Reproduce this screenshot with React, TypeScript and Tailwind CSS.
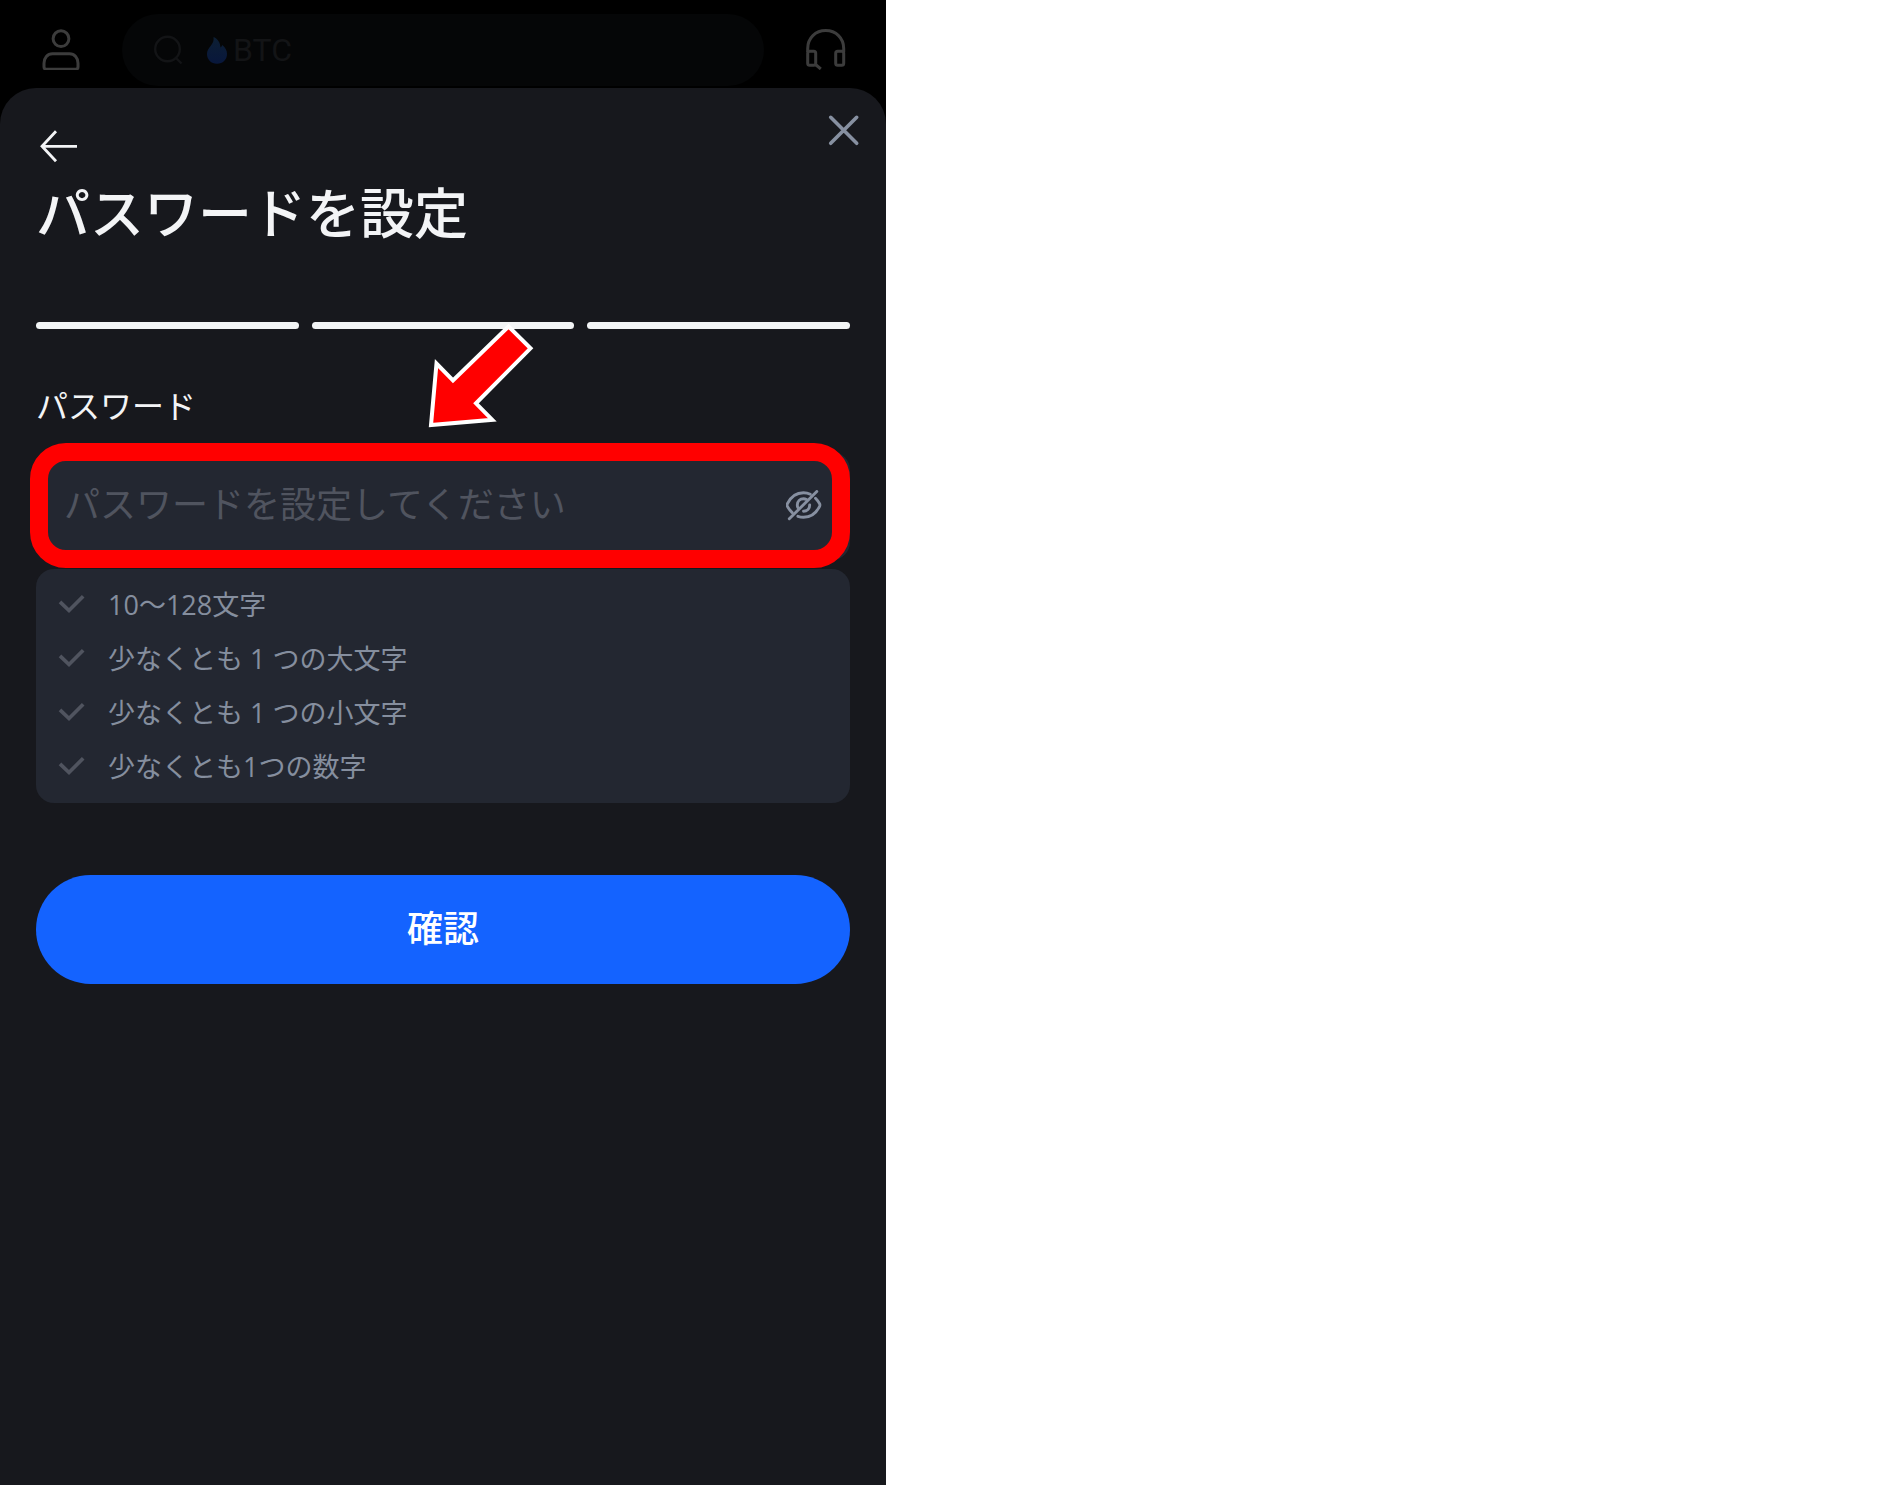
import { useState } from 'react';

const rules = [
  '10〜128文字',
  '少なくとも 1 つの大文字',
  '少なくとも 1 つの小文字',
  '少なくとも1つの数字',
];

const UserIcon = () => (
  <svg viewBox="0 0 40 46" className="h-[46px] w-10" fill="none" stroke="#3c3c3c" strokeWidth="3">
    <circle cx="21" cy="14.700" r="7.900" />
    <path d="M12.500 29.800h17c5 0 8.500 4 8.500 9.500v3.700c0 1.400-.8 2.200-2.200 2.200H6.200c-1.400 0-2.200-.8-2.200-2.200v-3.700c0-5.500 3.500-9.500 8.500-9.500z" />
  </svg>
);

const HeadsetIcon = () => (
  <svg viewBox="0 0 40 46" className="h-[46px] w-10" fill="none" stroke="#3c3c3c" strokeWidth="3">
    <path d="M1.700 28v-3.500C1.700 14 9.500 6.600 19.700 6.600S37.700 14 37.700 24.500V28" />
    <rect x="1.700" y="27.300" width="8" height="14" rx="2" />
    <rect x="29.700" y="27.300" width="8" height="14" rx="2" />
    <path d="M9.500 40.500l5.300 4.500" />
  </svg>
);

const SearchIcon = () => (
  <svg viewBox="0 0 32 32" className="h-8 w-8" fill="none" stroke="#131416" strokeWidth="2.400">
    <circle cx="13.500" cy="15" r="12.300" />
    <path d="M21.500 23.500l6 6" />
  </svg>
);

const FlameIcon = () => (
  <svg viewBox="0 0 20 27" className="h-[27px] w-5">
    <defs>
      <linearGradient id="flame" x1="0" y1="0" x2="0" y2="1">
        <stop offset="0" stopColor="#0d1f33" />
        <stop offset="1" stopColor="#08173c" />
      </linearGradient>
    </defs>
    <path
      fill="url(#flame)"
      d="M6.500 0c4.500 2 6.700 5.500 7 10.500.9-.5 1.400-1.300 1.700-2.500C18.500 10.500 20 13.500 20 17c0 5.700-4.300 9.800-10 9.800S0 22.700 0 17c0-3.500 1.800-6 4-8.500C6 6 7 3.500 6.500 0z"
    />
  </svg>
);

const EyeOffIcon = () => (
  <svg viewBox="0 0 36 32" className="h-8 w-9" fill="none" stroke="#8790a1" strokeWidth="2.900" strokeLinecap="round">
    <path d="M24.300 4.200C22.200 3.200 20 2.700 17.500 2.700 10.500 2.700 4.600 7.200 1.400 13.700c-.4.900-.4 1.700 0 2.600C2.700 18.800 4.300 20.800 6.200 22.600" />
    <path d="M29.500 8.200c1.600 1.600 2.900 3.400 4.100 5.500.4.900.4 1.700 0 2.600C30.400 22.800 24.500 27.300 17.500 27.300c-2 0-3.900-.4-5.600-1" />
    <path d="M20.500 9.500c-1-.5-2-.7-3-.7-3.500 0-6.200 2.700-6.200 6.200 0 1 .2 2 .7 2.800" />
    <path d="M23.700 15c0 3.500-2.700 6.200-6.200 6.200" />
    <path d="M30.800 1.500L3.300 28.800" />
  </svg>
);

const App = () => {
  const [hide, setHide] = useState(true);
  const [password, setPassword] = useState('');

  const handleSubmit = (e: any) => {
    e.preventDefault();
  };

  return (
    <div className="min-h-screen bg-white">
      <div className="flex min-h-screen w-full max-w-[886px] flex-col bg-black font-[Roboto,'Noto_Sans_CJK_JP',sans-serif]">
        <header className="flex h-[88px] items-start gap-[42px] px-10 pt-[14px]">
          <button type="button" aria-label="アカウント" className="mt-[10px]">
            <UserIcon />
          </button>
          <div className="flex h-[72px] flex-1 items-center rounded-full bg-[#050607] pl-8">
            <SearchIcon />
            <span className="ml-[21px]">
              <FlameIcon />
            </span>
            <span className="ml-[6px] text-[32px] leading-10 text-[#131416]">BTC</span>
          </div>
          <button type="button" aria-label="サポート" className="mt-[10px]">
            <HeadsetIcon />
          </button>
        </header>

        <main className="flex-1 rounded-t-[36px] bg-[#17181d] pt-6">
          <div className="flex items-start justify-between pr-6 pl-9">
            <button type="button" aria-label="戻る" className="mt-3">
              <svg viewBox="0 0 44 44" className="h-11 w-11" fill="none" stroke="#f3f4f6" strokeWidth="2.800">
                <path d="M41 22.300H6M20 7.300L6 22.300l14 15" />
              </svg>
            </button>
            <button type="button" aria-label="閉じる">
              <svg viewBox="0 0 36 36" className="h-9 w-9" fill="none" stroke="#8790a1" strokeWidth="3.600" strokeLinecap="round">
                <path d="M4.700 5.300l26 26M30.700 5.300l-26 26" />
              </svg>
            </button>
          </div>

          <div className="px-9">
            <h1 className="mt-3 text-[54px] leading-[72px] font-medium text-[#f3f4f6]">パスワードを設定</h1>

            <div className="mt-[70px] flex gap-[13px]">
              <div className="h-[7px] flex-1 rounded-full bg-[#f2f4f5]" />
              <div className="h-[7px] flex-1 rounded-full bg-[#f2f4f5]" />
              <div className="h-[7px] flex-1 rounded-full bg-[#f2f4f5]" />
            </div>

            <form onSubmit={handleSubmit} className="mt-[54px]">
              <label htmlFor="password" className="block text-[32px] leading-[48px] text-[#f3f4f6]">
                パスワード
              </label>

              <div className="relative mt-[21px]">
                <div className="flex h-[108px] items-center rounded-[18px] bg-[#232731] pr-7 pl-7">
                  <input
                    id="password"
                    name="password"
                    type={hide ? 'password' : 'text'}
                    value={password}
                    onChange={(e) => setPassword(e.target.value)}
                    placeholder="パスワードを設定してください"
                    className="h-full min-w-0 flex-1 bg-transparent text-[36px] text-[#f3f4f6] outline-none placeholder:text-[#50545f]"
                  />
                  <button type="button" aria-label="パスワードを表示" onClick={() => setHide(!hide)}>
                    <EyeOffIcon />
                  </button>
                </div>

                {/* highlight frame + pointer */}
                <div className="pointer-events-none absolute -top-[9px] right-0 -bottom-2 -left-[6px] rounded-[36px] border-[18px] border-[#ff0000]" />
                <svg viewBox="0 0 108 108" className="pointer-events-none absolute -top-[130px] left-[391px] h-[108px] w-[108px]">
                  <path
                    d="M81.500 4.500L103.500 26.300L49 81.300L65.300 97.800L4 103L9.500 41.500L26 58.500Z"
                    fill="#ff0000"
                    stroke="#fff"
                    strokeWidth="4"
                  />
                </svg>
              </div>

              <ul className="mt-[9px] rounded-[18px] bg-[#232731] py-[9px] pl-[22px]">
                {rules.map((rule) => (
                  <li key={rule} className="flex h-[54px] items-center gap-[22px] text-[27px] leading-10 text-[#858e9e]">
                    <svg viewBox="0 0 28 28" className="h-7 w-7" fill="none" stroke="#50545f" strokeWidth="3.700">
                      <path d="M2 10.800l9 8.700L25.200 5.300" />
                    </svg>
                    <span className="font-['Open_Sans','Noto_Sans_CJK_JP',sans-serif]">{rule}</span>
                  </li>
                ))}
              </ul>

              <button
                type="submit"
                className="mt-[72px] h-[109px] w-full cursor-pointer rounded-full bg-[#1463ff] text-[36px] font-medium text-white"
              >
                確認
              </button>
            </form>
          </div>
        </main>
      </div>
    </div>
  );
};

export default App;
